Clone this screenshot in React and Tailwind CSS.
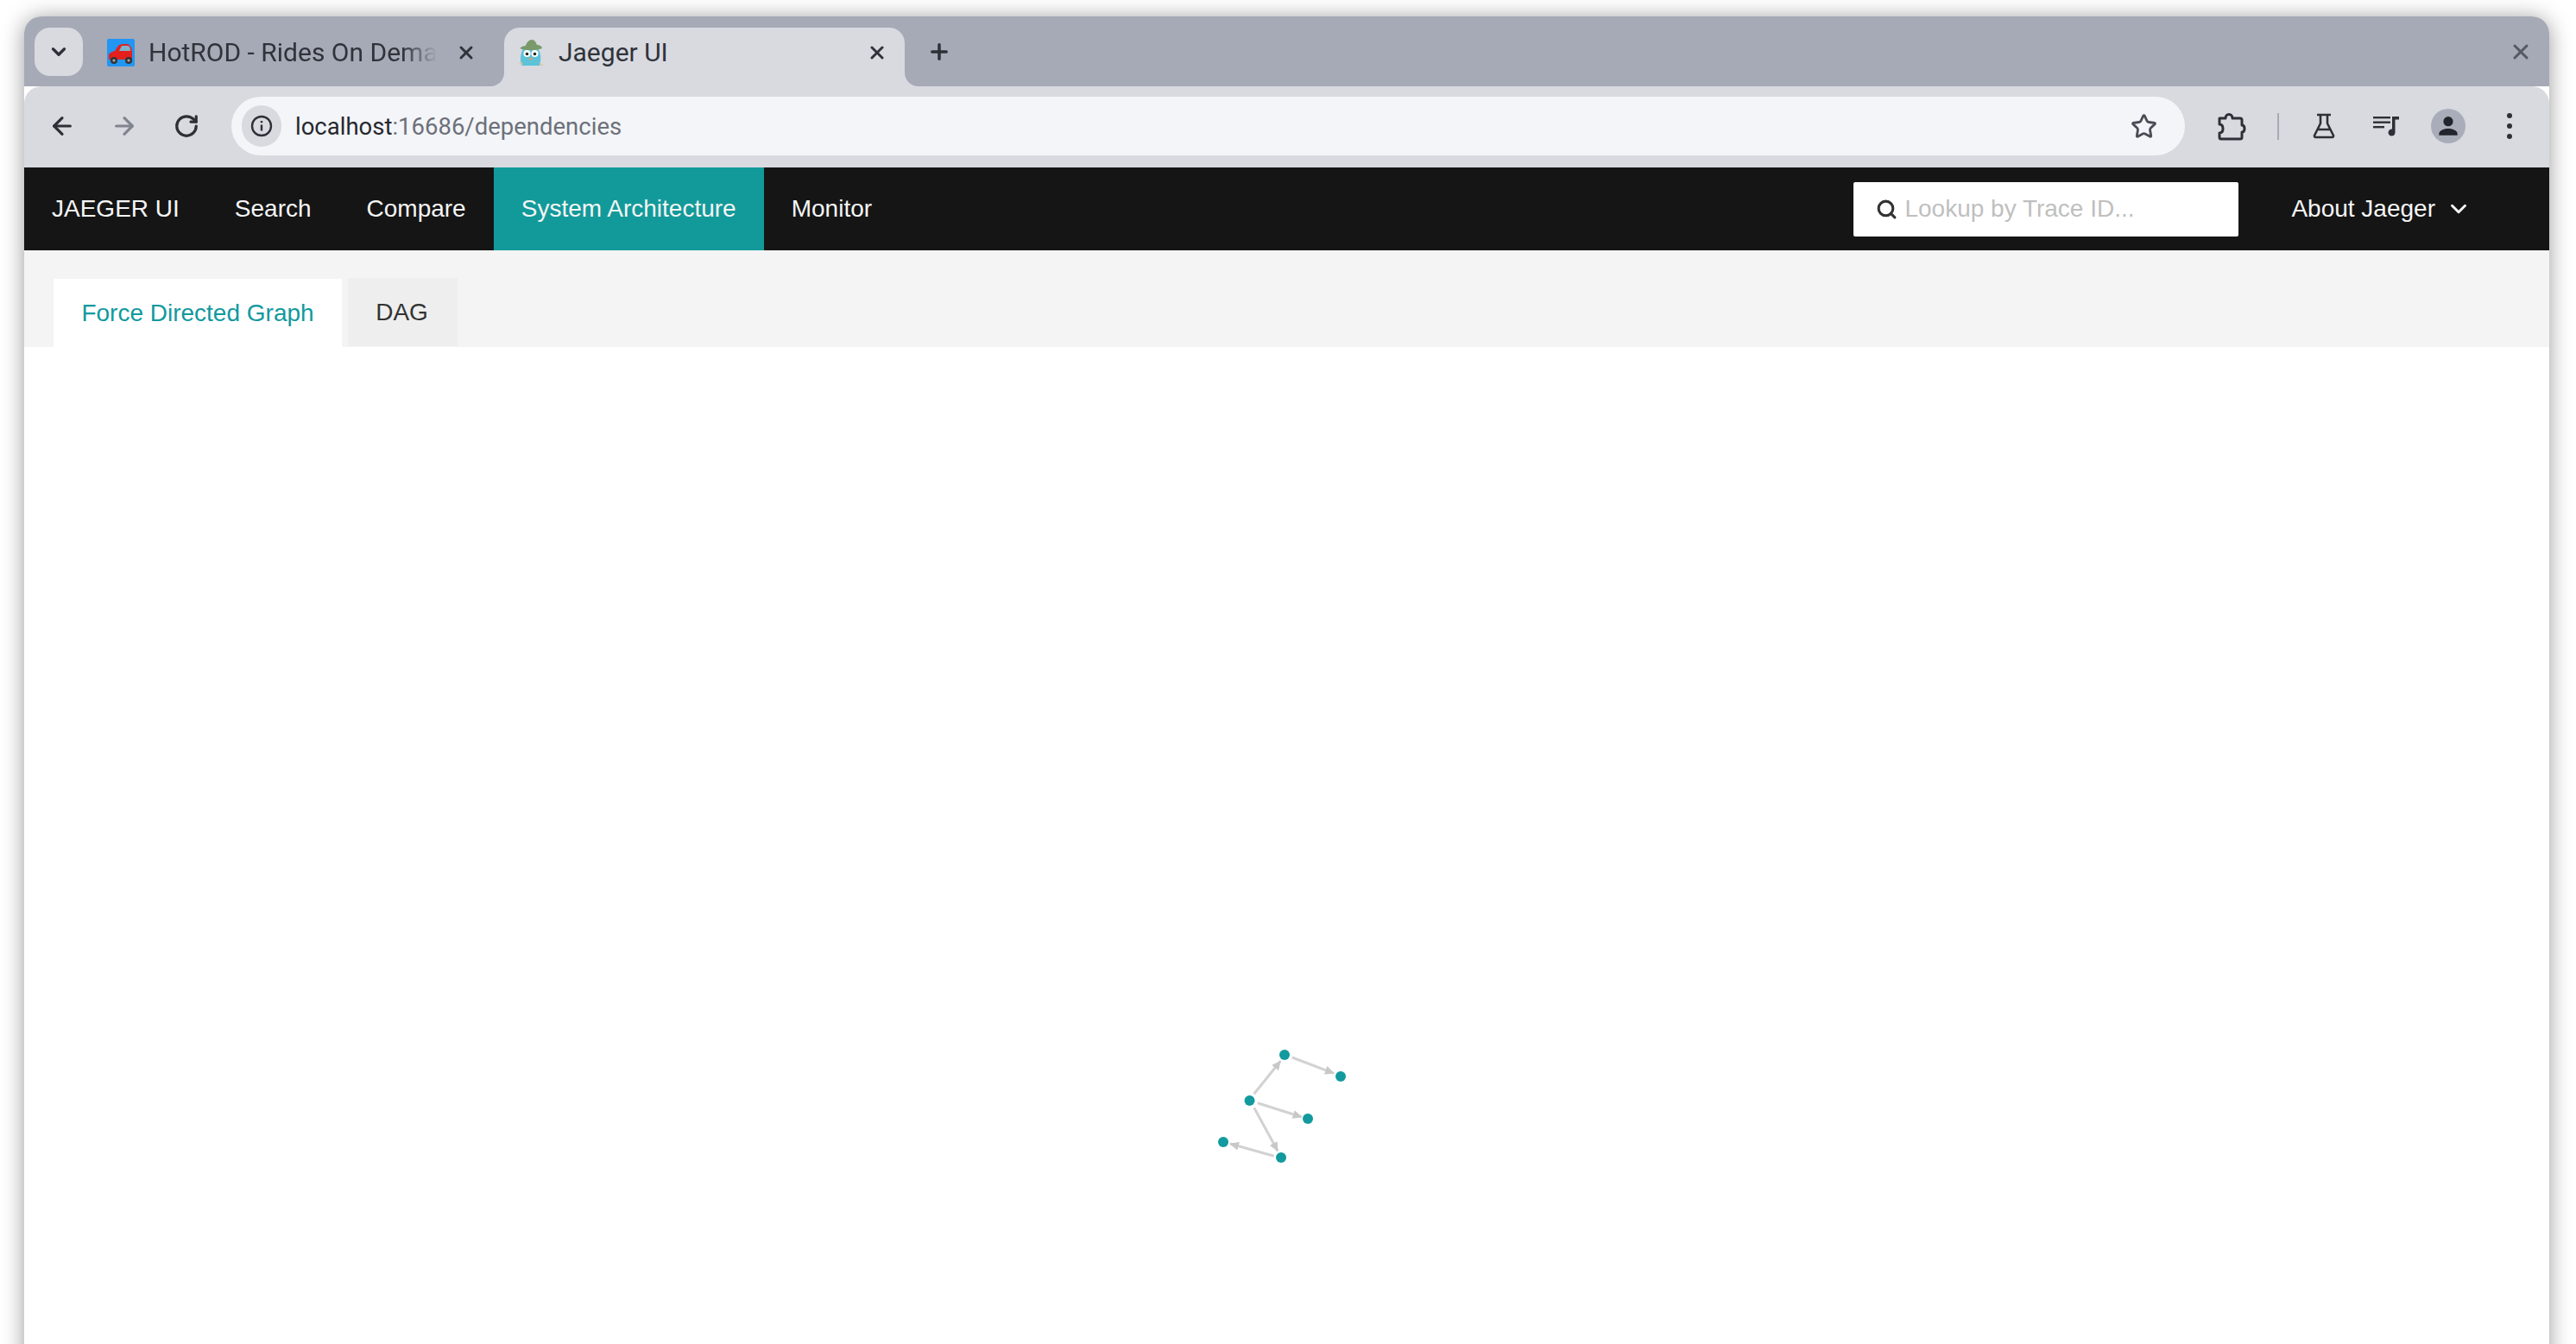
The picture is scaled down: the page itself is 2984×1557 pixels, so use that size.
import { ArrowLeft, ArrowRight, ChevronDown, Plus, RotateCw, Search, Star, X } from "lucide-react";

const NAV_ITEMS = ["Search", "Compare", "System Architecture", "Monitor"];

const EDGES = [
  [52.7, 62.3, 83.3, 24.3],
  [96.7, 20, 145, 38.3],
  [56.7, 72.7, 107.7, 89],
  [52.7, 78.3, 80, 128.3],
  [75.7, 134.3, 25, 120],
];

const NODES = [
  [88, 17],
  [153, 42],
  [47.5, 70],
  [115, 91],
  [17, 118],
  [84, 136],
];

const CarIcon = () => (
  <svg viewBox="0 0 32 32" className="h-[32px] w-[32px] shrink-0">
    <rect width="32" height="32" rx="2" fill="#2196f3" />
    <path d="M2 24v-5c0-2 3-4 7-5l4-6c1-1 3-2 6-2h4c3 0 5 3 6 8v10z" fill="#e3201c" />
    <path d="M14 14l3-6h7c2 0 3 3 3 6z" fill="#7fb4c9" />
    <circle cx="8" cy="25" r="4" fill="#333" />
    <circle cx="8" cy="25" r="1.6" fill="#aaa" />
    <circle cx="25" cy="25" r="4" fill="#333" />
    <circle cx="25" cy="25" r="1.6" fill="#aaa" />
  </svg>
);

const GopherIcon = () => (
  <svg viewBox="0 0 32 32" className="h-[34px] w-[32px] shrink-0">
    <path d="M5 31c-2-7-1-14 2-20h17c4 6 4 13 2 20z" fill="#5cc3d8" />
    <path d="M3 11c2-2 5-3 7-3 1-4 4-7 7-7s5 3 6 6c3 0 6 2 6 4-8 3-18 3-26 0z" fill="#7a9a6a" />
    <circle cx="11.500" cy="17" r="4" fill="#fff" />
    <circle cx="20.500" cy="17" r="4" fill="#fff" />
    <circle cx="11.500" cy="17.500" r="1.800" fill="#222" />
    <circle cx="20.500" cy="17.500" r="1.800" fill="#222" />
    <ellipse cx="16" cy="23" rx="2.400" ry="1.600" fill="#c9a07a" />
    <path d="M2 28l4-1v4zM31 31l-5-4v4z" fill="#d9c8a8" />
  </svg>
);

const PuzzleIcon = () => (
  <svg viewBox="0 0 34 34" className="h-[34px] w-[34px]" fill="none" stroke="#2d3036" strokeWidth="3" strokeLinejoin="round">
    <path d="M3 8h7c0-6 8-6 8 0h9a2 2 0 0 1 2 2v6c4 0 4 8 0 8v6a2 2 0 0 1-2 2H5a2 2 0 0 1-2-2v-5c4 0 4-3 4-5s0-5-4-5z" />
  </svg>
);

const FlaskIcon = () => (
  <svg viewBox="0 0 30 30" className="h-[30px] w-[30px]" fill="none" stroke="#2d3036" strokeWidth="2.6" strokeLinejoin="round">
    <path d="M7 2h16M11 2v10L4 26a1.500 1.500 0 0 0 1.500 2h19a1.500 1.500 0 0 0 1.500-2L19 12V2M8.500 19h13" />
  </svg>
);

const MediaIcon = () => (
  <svg viewBox="0 0 32 24" className="h-[24px] w-[32px]" fill="#2d3036">
    <rect x="1" y="1" width="20" height="2.400" />
    <rect x="1" y="6.500" width="20" height="2.400" />
    <rect x="1" y="12" width="13" height="2.400" />
    <path d="M23 1h8v3.500h-4.500v15a4 4 0 1 1-3.500-3.900z" />
  </svg>
);

const AvatarIcon = () => (
  <div className="flex h-[40px] w-[40px] items-center justify-center rounded-full bg-[#a9adba]">
    <svg viewBox="0 0 24 24" className="h-[32px] w-[32px]" fill="#22252b">
      <circle cx="12" cy="8" r="4.200" />
      <path d="M4 20v-1.500c0-2.800 5-4.300 8-4.300s8 1.500 8 4.300V20z" />
    </svg>
  </div>
);

const InfoChip = () => (
  <div className="flex h-[48px] w-[46px] shrink-0 items-center justify-center rounded-full bg-[#d8dae0]">
    <svg viewBox="0 0 26 26" className="h-[26px] w-[26px]" fill="none" stroke="#2d3036" strokeWidth="2.400">
      <circle cx="13" cy="13" r="11" />
      <path d="M13 11.500v7" />
      <path d="M13 7v2.200" />
    </svg>
  </div>
);

const TabCorner = ({ side }) => (
  <svg
    viewBox="0 0 16 16"
    className={`absolute bottom-0 h-[16px] w-[16px] ${side === "left" ? "left-[-16px]" : "right-[-16px] scale-x-[-1]"}`}
  >
    <path d="M16 0v16H0c9 0 16-7 16-16z" fill="#d8dae0" />
  </svg>
);

const BrowserTabs = () => (
  <div className="flex h-[81px] items-start bg-[#a6aab6] pl-[12px] pt-[13px] font-['Roboto',sans-serif] text-[30px] text-[#30333a]">
    <div className="flex h-[56px] w-[56px] shrink-0 items-center justify-center rounded-[18px] bg-[#d8dae0]">
      <ChevronDown size={26} strokeWidth={3} color="#2d3036" />
    </div>

    <div className="flex h-[68px] w-[488px] shrink-0 items-center pb-[10px] pl-[28px]">
      <CarIcon />
      <span className="ml-[16px] mt-[-2px] w-[334px] overflow-hidden whitespace-nowrap [mask-image:linear-gradient(to_right,black_88%,transparent)]">
        HotROD - Rides On Demand
      </span>
      <X size={24} strokeWidth={3} color="#30333a" className="ml-[22px]" />
    </div>

    <div className="relative flex h-[68px] w-[464px] shrink-0 items-center rounded-t-[18px] bg-[#d8dae0] pb-[10px] pl-[15px]">
      <TabCorner side="left" />
      <TabCorner side="right" />
      <GopherIcon />
      <span className="ml-[16px] mt-[-2px] w-[357px] whitespace-nowrap">Jaeger UI</span>
      <X size={24} strokeWidth={3} color="#30333a" />
    </div>

    <div className="flex h-[56px] flex-1 items-center pr-[19px] pl-[26px]">
      <Plus size={28} strokeWidth={3} color="#2d3036" />
      <X size={28} strokeWidth={2.6} color="#555962" className="ml-auto" />
    </div>
  </div>
);

const Toolbar = () => (
  <div className="flex h-[94px] items-center rounded-t-[20px] bg-[#d8dae0] pb-[2px]">
    <div className="flex w-[240px] shrink-0 items-center pl-[28px]">
      <ArrowLeft size={32} strokeWidth={2.4} color="#2d3036" />
      <ArrowRight size={32} strokeWidth={2.4} color="#81848e" className="ml-[40px]" />
      <RotateCw size={30} strokeWidth={2.6} color="#2d3036" className="ml-[41px]" />
    </div>

    <div className="flex h-[68px] w-[2263px] shrink-0 items-center rounded-full bg-[#f3f5f8] pl-[12px] pr-[32px] font-['Roboto',sans-serif] text-[27.5px] text-[#6d7079]">
      <InfoChip />
      <span className="ml-[16px] pt-[2px]">
        <span className="text-[#26282d]">localhost</span>:16686/dependencies
      </span>
      <Star size={31} strokeWidth={2.2} color="#4a4d55" className="ml-auto" />
    </div>

    <div className="flex flex-1 items-center pl-[37px]">
      <PuzzleIcon />
      <div className="ml-[36px] h-[31px] w-[2px] bg-[#a6aab6]" />
      <div className="ml-[37px]">
        <FlaskIcon />
      </div>
      <div className="ml-[41px]">
        <MediaIcon />
      </div>
      <div className="ml-[36px]">
        <AvatarIcon />
      </div>
      <div className="ml-[48px] flex flex-col gap-[6px]">
        <span className="h-[6px] w-[6px] rounded-full bg-[#2d3036]" />
        <span className="h-[6px] w-[6px] rounded-full bg-[#2d3036]" />
        <span className="h-[6px] w-[6px] rounded-full bg-[#2d3036]" />
      </div>
    </div>
  </div>
);

const TopNav = () => (
  <div className="flex h-[96px] items-center bg-[#151515] text-[28px] text-[#f5f5f5]">
    <span className="px-[32px]">JAEGER UI</span>
    {NAV_ITEMS.map((item) => (
      <div
        key={item}
        className={`flex h-full items-center px-[32px] ${item === "System Architecture" ? "bg-[#129a9a]" : ""}`}
      >
        {item}
      </div>
    ))}
    <div className="ml-auto flex h-[63px] w-[446px] items-center rounded-[2px] bg-white pl-[26px]">
      <Search size={25} strokeWidth={3} color="#333" />
      <span className="ml-[8px] text-[#bfbfbf]">Lookup by Trace ID...</span>
    </div>
    <div className="ml-[61px] flex items-center pr-[90px]">
      <span>About Jaeger</span>
      <ChevronDown size={30} strokeWidth={2.4} className="ml-[12px]" />
    </div>
  </div>
);

const SubTabs = () => (
  <div className="flex h-[112px] items-end gap-[7px] bg-[#f4f4f4] pl-[34px] text-[28px]">
    <div className="flex h-[79px] w-[334px] items-center justify-center bg-white text-[#11999e]">
      Force Directed Graph
    </div>
    <div className="mb-[1px] flex h-[79px] w-[127px] items-center justify-center bg-[#eeeeee] pr-[2px] text-[#333]">
      DAG
    </div>
  </div>
);

const Graph = () => (
  <svg viewBox="0 0 170 155" className="ml-[1372px] mt-[803px] h-[155px] w-[170px]">
    <defs>
      <marker id="arrow" markerUnits="userSpaceOnUse" markerWidth="12" markerHeight="10" refX="10" refY="5" orient="auto">
        <path d="M0 0l11 5-11 5z" fill="#c8c8c8" />
      </marker>
    </defs>
    {EDGES.map(([x1, y1, x2, y2]) => (
      <line key={`${x1}-${y1}`} x1={x1} y1={y1} x2={x2} y2={y2} stroke="#d2d2d2" strokeWidth="3" markerEnd="url(#arrow)" />
    ))}
    {NODES.map(([cx, cy]) => (
      <circle key={`${cx}-${cy}`} cx={cx} cy={cy} r="6" fill="#129a9e" />
    ))}
  </svg>
);

export default function App() {
  return (
    <div className="h-[1557px] w-[2984px] overflow-hidden bg-white pl-[28px] pt-[19px] font-['Liberation_Sans',sans-serif]">
      <div className="h-[1600px] w-[2925px] overflow-hidden rounded-t-[20px] shadow-[0_2px_26px_rgba(0,0,0,0.4)]">
        <BrowserTabs />
        <Toolbar />
        <TopNav />
        <SubTabs />
        <Graph />
      </div>
    </div>
  );
}
